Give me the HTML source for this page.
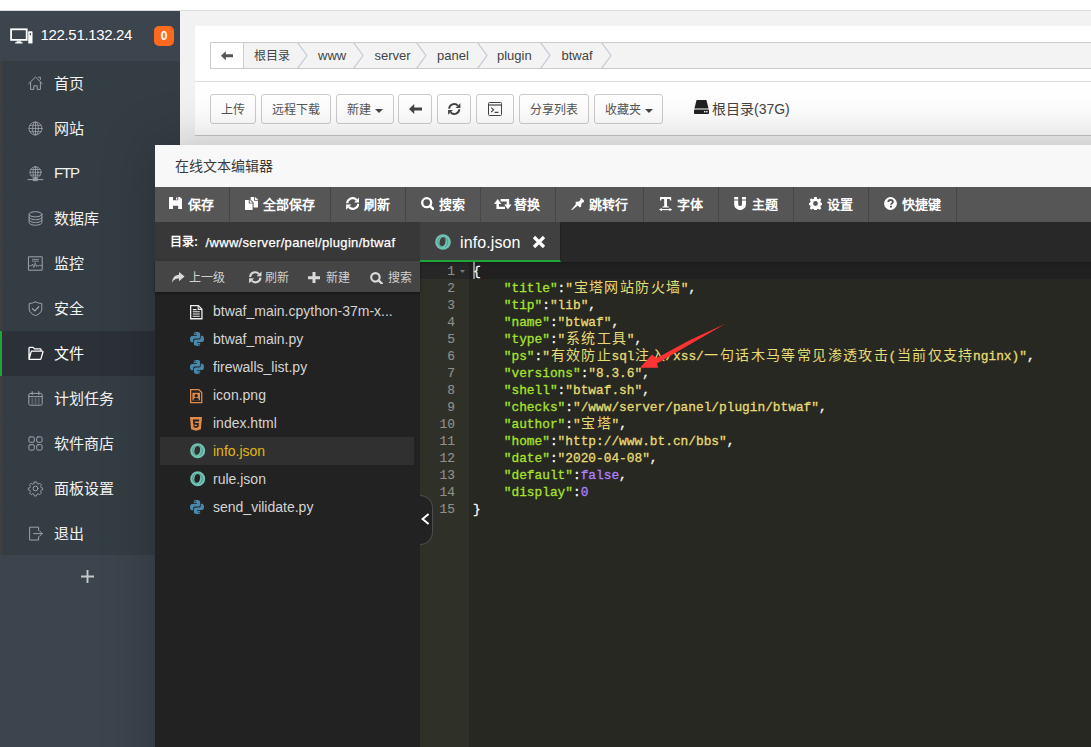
<!DOCTYPE html>
<html lang="zh-CN">
<head>
<meta charset="utf-8">
<title>panel</title>
<style>
*{box-sizing:border-box;margin:0;padding:0}
html,body{width:1091px;height:747px;overflow:hidden;background:#f2f2f2;font-family:"Liberation Sans",sans-serif;}
.abs{position:absolute}
#page{position:relative;width:1091px;height:747px;overflow:hidden;background:#f2f2f2}
/* top strip */
#topstrip{left:0;top:0;width:1091px;height:11px;background:#fff;border-bottom:1px solid #dcdcdc}
/* sidebar */
#side{left:0;top:11px;width:180px;height:736px;background:#3c444d}
#sidehead{left:0;top:0;width:180px;height:50px;background:#3c444d}
#ip{left:40.5px;top:14px;font-size:15px;line-height:20px;color:#fff;white-space:nowrap;letter-spacing:-0.33px}
#badge{left:154px;top:15px;width:20px;height:20px;border-radius:5px;background:#ff6a1f;color:#fff;font-size:12px;font-weight:bold;line-height:20px;text-align:center}
#menu{left:0;top:50px;width:180px;height:494px;background:#353d44}
#menu .edge{left:0;top:0;width:2px;height:494px;background:repeating-linear-gradient(#3f3f3f 0,#3f3f3f 44px,#353d44 44px,#353d44 45px)}
.mi{left:0;width:180px;height:45px;}
.mi .t{position:absolute;left:54px;top:0;line-height:45px;font-size:15px;color:#f2f2f2;white-space:nowrap}
.mi svg{position:absolute;left:28px;top:15px;width:15px;height:15px;overflow:visible}
.mi.cur{background:#2c3138;border-left:2px solid #20a53a}
.mi.cur .t{left:52px;color:#fff}
.mi.cur svg{left:26px}
#plus{left:81px;top:559px;width:13px;height:13px}
/* main */
#card{left:195px;top:26px;width:900px;height:110px;background:#fff;border-bottom:1px solid #c8c8c8}
#crumb{left:15px;top:15.5px;width:890px;height:27.5px;border:1px solid #ccc;background:#f3f3f3}
#crumb .back{left:0;top:0;width:33px;height:25px;background:#fff;border-right:1px solid #ccc}
#crumb .c{top:0;height:25px;line-height:25px;font-size:13px;color:#444;white-space:nowrap}
#crumb svg.chev{position:absolute;top:0;width:11px;height:25px}
#sep1{left:0;top:55px;width:900px;height:1px;background:#ddd}
.btn{top:68px;height:30px;border:1px solid #ccc;border-radius:3px;background:#fff;font-size:12px;line-height:30px;color:#555;text-align:center;white-space:nowrap}
#disk{left:517px;top:73px;font-size:14px;line-height:20px;color:#444;white-space:nowrap}
/* modal */
#modal{left:155px;top:145px;width:1040px;height:720px;background:#222;box-shadow:1px 1px 50px rgba(0,0,0,.25)}
#mtitle{left:0;top:0;width:960px;height:42px;background:#f8f8f8;color:#3a3a3a;font-size:14px;line-height:42px;padding-left:20px}
#tbar{left:0;top:42px;width:960px;height:35px;background:#565656}
.tb{top:0;height:35px;border-right:1px solid #464646;color:#fff;font-size:13px;font-weight:bold;line-height:35px;white-space:nowrap}
.tb .tx{position:absolute;top:0;right:14.2px}
.tb svg{position:absolute;left:14px;top:10px;width:14px;height:14px}
#dirrow{left:0;top:77px;width:265px;height:39px;background:#383838;color:#fff;font-size:12px;line-height:41px;white-space:nowrap}
#tabbar{left:265px;top:77px;width:700px;height:40px;background:#282828}
#tab{left:0;top:0;width:141px;height:40px;background:#404040;border-right:1px solid #222;border-bottom:2px solid #20a53a}
#treebar{left:0;top:116px;width:265px;height:31px;background:#454545;box-shadow:0 1px 3px rgba(0,0,0,.45);z-index:2;color:#d0d0d0;font-size:12px;line-height:35px}
#tree{left:0;top:147px;width:265px;height:480px;background:#222}
.f{left:0;width:265px;height:28px}
.f .n{position:absolute;left:58px;top:0;line-height:28px;font-size:14px;color:#d4d4d4;white-space:nowrap}
.f svg{position:absolute;left:35px;top:8px;width:13px;height:14px;overflow:visible}
#selrow{left:5px;top:145px;width:254px;height:28px;background:#303030}
/* editor */
#ed{left:265px;top:117px;width:700px;height:500px;background:#272822}
#gut{left:0;top:0;width:49px;height:500px;background:#2f3129}
#actg{left:0;top:0;width:49px;height:17px;background:linear-gradient(#1f1f1f,#272727 4px)}
#actl{left:49px;top:0;width:660px;height:17px;background:linear-gradient(#1b1b1b,#202020 4px)}
.ln{right:14px;height:17px;line-height:17px;font-family:"Liberation Mono",monospace;font-size:12.83px;color:#8f908a}
.cl{left:53px;height:17px;line-height:17px;font-family:"Liberation Mono",monospace;font-size:12.83px;color:#f8f8f2;white-space:nowrap}
.cl i{display:inline-block;width:7.7px;font-style:normal;text-align:left}
.cl{-webkit-text-stroke:.3px}.ln{-webkit-text-stroke:.15px}.k{color:#a6e22e}.s{color:#e6db74}.p{color:#ae81ff}
.z{display:inline-block;width:15.4px;text-align:center;font-size:14px;-webkit-text-stroke:0}
#handle{left:265px;top:350px;width:13px;height:50px;background:#222;border:1px solid #4c4c4c;border-left:none;border-radius:0 13px 13px 0}
</style>
</head>
<body>
<div id="page">
<div id="topstrip" class="abs"></div>

<!-- main card -->
<div id="card" class="abs">
  <div id="crumb" class="abs">
    <div class="back abs"><svg class="abs" style="left:10.3px;top:8px;width:12px;height:9.5px" viewBox="0 0 13 10"><path d="M0 5L5.2 0V3.4H13V6.6H5.2V10Z" fill="#555"/></svg></div>
    <div class="c abs" style="left:42.5px;font-size:12px;line-height:27px">根目录</div>
    <div class="c abs" style="left:107px;font-size:13px">www</div>
    <div class="c abs" style="left:163.5px;font-size:13px">server</div>
    <div class="c abs" style="left:226px;font-size:13px">panel</div>
    <div class="c abs" style="left:286px;font-size:13px">plugin</div>
    <div class="c abs" style="left:350.5px;font-size:13px">btwaf</div>
    <svg class="chev" style="left:86px" viewBox="0 0 11 25" fill="none" stroke="#c6c7d6" stroke-width="1.2"><path d="M.5 -.5L10 12.5L.5 25.5"/></svg>
    <svg class="chev" style="left:142px" viewBox="0 0 11 25" fill="none" stroke="#c6c7d6" stroke-width="1.2"><path d="M.5 -.5L10 12.5L.5 25.5"/></svg>
    <svg class="chev" style="left:205px" viewBox="0 0 11 25" fill="none" stroke="#c6c7d6" stroke-width="1.2"><path d="M.5 -.5L10 12.5L.5 25.5"/></svg>
    <svg class="chev" style="left:266px" viewBox="0 0 11 25" fill="none" stroke="#c6c7d6" stroke-width="1.2"><path d="M.5 -.5L10 12.5L.5 25.5"/></svg>
    <svg class="chev" style="left:329px" viewBox="0 0 11 25" fill="none" stroke="#c6c7d6" stroke-width="1.2"><path d="M.5 -.5L10 12.5L.5 25.5"/></svg>
    <svg class="chev" style="left:390px" viewBox="0 0 11 25" fill="none" stroke="#c6c7d6" stroke-width="1.2"><path d="M.5 -.5L10 12.5L.5 25.5"/></svg>
  </div>
  <div id="sep1" class="abs"></div>
  <div class="btn abs" style="left:15px;width:46px">上传</div>
  <div class="btn abs" style="left:66px;width:70px">远程下载</div>
  <div class="btn abs" style="left:141px;width:58px">新建<svg style="display:inline-block;vertical-align:middle;margin-left:4px;width:8px;height:4px" viewBox="0 0 8 4"><path d="M0 0H8L4 4Z" fill="#444"/></svg></div>
  <div class="btn abs" style="left:203px;width:34px"><svg class="abs" style="left:10px;top:9px;width:13px;height:10px" viewBox="0 0 13 10"><path d="M0 5L5.2 0V3.4H13V6.6H5.2V10Z" fill="#444"/></svg></div>
  <div class="btn abs" style="left:242px;width:34px"><svg class="abs" style="left:10px;top:8px;width:12.5px;height:12px" viewBox="0 0 13.5 13"><g fill="none" stroke="#444" stroke-width="2.1"><path d="M1.2 6.2A5.4 5.4 0 0 1 10.6 2.9"/><path d="M12.3 6.8A5.4 5.4 0 0 1 2.9 10.1"/></g><path d="M13.4 .2V5.5H8.1Z M.1 12.8V7.5H5.4Z" fill="#444"/></svg></div>
  <div class="btn abs" style="left:281px;width:38px"><svg class="abs" style="left:11px;top:7px;width:14px;height:14px" viewBox="0 0 14 14" fill="none" stroke="#444" stroke-width="1"><rect x=".5" y=".5" width="13" height="13" rx="1"/><path d="M.5 3H13.5" stroke-width="1.2"/><path d="M3.2 5.6L5.6 7.8L3.2 10M6.6 10.4H10.4" stroke-width="1.1"/></svg></div>
  <div class="btn abs" style="left:324px;width:70px">分享列表</div>
  <div class="btn abs" style="left:399px;width:69px">收藏夹<svg style="display:inline-block;vertical-align:middle;margin-left:4px;width:8px;height:4px" viewBox="0 0 8 4"><path d="M0 0H8L4 4Z" fill="#444"/></svg></div>
  <svg class="abs" style="left:499px;top:74px;width:15px;height:14px" viewBox="0 0 15 14"><path d="M2.6 0H12.4L14.6 8.6H.4Z" fill="#222"/><rect x="0" y="9.4" width="15" height="4.6" rx=".8" fill="#222"/><rect x="10" y="11" width="1.4" height="1.4" fill="#fff"/><rect x="12.2" y="11" width="1.4" height="1.4" fill="#fff"/></svg>
  <div id="disk" class="abs">根目录(37G)</div>
</div>

<!-- sidebar -->
<div id="side" class="abs">
  <div id="sidehead" class="abs">
    <svg class="abs" style="left:9.5px;top:17px;width:23px;height:16px" viewBox="0 0 23 16"><rect x="1.1" y="1.3" width="15.6" height="10.6" fill="none" stroke="#fff" stroke-width="1.8"/><path d="M6.6 13.2H11.2V14.2H12.6V15.6H5.2V14.2H6.6Z" fill="#fff"/><rect x="18.2" y="3.2" width="4.3" height="12.4" rx=".7" fill="#fff"/><rect x="19.8" y="5" width="1.1" height="2.4" fill="#3c444d"/></svg>
    <div id="ip" class="abs">122.51.132.24</div>
    <div id="badge" class="abs">0</div>
  </div>
  <div id="menu" class="abs"><div class="edge abs"></div>
<div class="mi abs" style="top:0px"><svg viewBox="0 0 15 15" fill="none" stroke="#9ea3a7" stroke-width="1" stroke-linejoin="round" stroke-linecap="round"><path d="M0.8 7.6 L7.5 1 L14.2 7.6 M2.6 6.6 V13.4 H5.8 V9.8 H9.2 V13.4 H12.4 V6.6 M10.6 1.2 h1.8 v2.2"/></svg><span class="t">首页</span></div>
<div class="mi abs" style="top:45px"><svg viewBox="0 0 15 15" fill="none" stroke="#9ea3a7" stroke-width="1" stroke-linejoin="round" stroke-linecap="round"><g stroke-width=".8"><circle cx="7.5" cy="7.5" r="6.5"/><ellipse cx="7.5" cy="7.5" rx="2.9" ry="6.5"/><path d="M7.5 1V14M1 7.5H14M1.9 4.3H13.1M1.9 10.7H13.1"/></g></svg><span class="t">网站</span></div>
<div class="mi abs" style="top:90px"><svg viewBox="0 0 15 15" fill="none" stroke="#9ea3a7" stroke-width="1" stroke-linejoin="round" stroke-linecap="round"><g stroke-width=".8"><circle cx="7.5" cy="6.3" r="5.6"/><ellipse cx="7.5" cy="6.3" rx="2.5" ry="5.6"/><path d="M7.5 .7V11.9M1.9 6.3H13.1M2.7 3.5H12.3M2.7 9.1H12.3"/></g><path d="M0 13.6H15M5.6 12.6h3.8v2H5.6z"/></svg><span class="t" style="letter-spacing:-1.2px;top:-1px">FTP</span></div>
<div class="mi abs" style="top:135px"><svg viewBox="0 0 15 15" fill="none" stroke="#9ea3a7" stroke-width="1" stroke-linejoin="round" stroke-linecap="round"><ellipse cx="7.5" cy="3.3" rx="6.4" ry="2.6"/><path d="M1.1 3.3V11.6C1.1 13 4 14.2 7.5 14.2S13.9 13 13.9 11.6V3.3M1.1 6.1C1.1 7.5 4 8.7 7.5 8.7S13.9 7.5 13.9 6.1M1.1 8.9C1.1 10.3 4 11.5 7.5 11.5S13.9 10.3 13.9 8.9"/></svg><span class="t">数据库</span></div>
<div class="mi abs" style="top:180px"><svg viewBox="0 0 15 15" fill="none" stroke="#9ea3a7" stroke-width="1" stroke-linejoin="round" stroke-linecap="round"><rect x=".8" y=".8" width="13.4" height="13.4"/><path d="M4.5 3.4H10.5M4.5 5.2H10.5M.8 9.8H3.6L4.6 8L5.8 11.6L7.2 6.8L8.4 10.6L9.4 9L10.2 10.2L11.2 9.4H14.2" stroke-width=".8"/></svg><span class="t">监控</span></div>
<div class="mi abs" style="top:225px"><svg viewBox="0 0 15 15" fill="none" stroke="#9ea3a7" stroke-width="1" stroke-linejoin="round" stroke-linecap="round"><path d="M7.5 .8C5.6 1.9 3.4 2.4 1.2 2.5V7.8C1.2 11 3.9 13.3 7.5 14.6C11.1 13.3 13.8 11 13.8 7.8V2.5C11.6 2.4 9.4 1.9 7.5 .8Z"/><path d="M4.4 7.6L6.8 9.9L10.8 5.7" stroke-width="1.3"/></svg><span class="t">安全</span></div>
<div class="mi abs cur" style="top:270px"><svg viewBox="0 0 15 15" fill="none" stroke="#fff" stroke-width="1" stroke-linejoin="round" stroke-linecap="round"><path d="M1 13.3V2.2C1 1.7 1.3 1.4 1.8 1.4H5.2L6.6 2.9H12.2C12.7 2.9 13 3.2 13 3.7V5.2M1 13.3L3.1 5.9C3.2 5.5 3.5 5.2 4 5.2H14.3C14.8 5.2 15 5.6 14.9 6L13 12.6C12.9 13 12.6 13.3 12.1 13.3Z" stroke-width="1.3"/></svg><span class="t">文件</span></div>
<div class="mi abs" style="top:315px"><svg viewBox="0 0 15 15" fill="none" stroke="#9ea3a7" stroke-width="1" stroke-linejoin="round" stroke-linecap="round"><rect x=".8" y="2.4" width="13.4" height="11.8" rx="1.6"/><path d="M.8 5.6H14.2M4.2 .6V3.6M10.8 .6V3.6"/><path d="M3.8 8H4.8M7 8H8M10.2 8H11.2M3.8 10H4.8M7 10H8M10.2 10H11.2M3.8 12H4.8M7 12H8M10.2 12H11.2" stroke-width=".9" opacity=".8"/></svg><span class="t">计划任务</span></div>
<div class="mi abs" style="top:360px"><svg viewBox="0 0 15 15" fill="none" stroke="#9ea3a7" stroke-width="1" stroke-linejoin="round" stroke-linecap="round"><rect x=".9" y=".9" width="5.4" height="5.4" rx="1.3"/><rect x="8.7" y=".9" width="5.4" height="5.4" rx="1.3"/><rect x=".9" y="8.7" width="5.4" height="5.4" rx="1.3"/><rect x="8.7" y="8.7" width="5.4" height="5.4" rx="1.3"/></svg><span class="t">软件商店</span></div>
<div class="mi abs" style="top:405px"><svg viewBox="0 0 15 15" fill="none" stroke="#9ea3a7" stroke-width="1" stroke-linejoin="round" stroke-linecap="round"><circle cx="7.5" cy="7.5" r="2.4"/><path d="M6.3 .9H8.7L9.1 2.7L10.3 3.2L11.9 2.2L13.5 3.9L12.5 5.4L13 6.6L14.7 7V8.9L13 9.3L12.4 10.5L13.4 12.1L11.8 13.7L10.2 12.7L9 13.2L8.6 15H6.4L6 13.2L4.8 12.7L3.2 13.7L1.6 12.1L2.6 10.5L2 9.3L.3 8.9V7L2 6.6L2.5 5.4L1.5 3.9L3.1 2.2L4.7 3.2L5.9 2.7Z" stroke-width=".9"/></svg><span class="t">面板设置</span></div>
<div class="mi abs" style="top:450px"><svg viewBox="0 0 15 15" fill="none" stroke="#9ea3a7" stroke-width="1" stroke-linejoin="round" stroke-linecap="round"><path d="M10.6 4.4V1.2H1.6V14H10.6V10.8M5.6 7.6H14.2M11.6 5L14.2 7.6L11.6 10.2"/></svg><span class="t">退出</span></div>
  </div>
  <svg id="plus" class="abs" viewBox="0 0 13 13" fill="none" stroke="#c6c8ca" stroke-width="1.9"><path d="M6.5 0V13M0 6.5H13"/></svg>
</div>

<!-- modal -->
<div id="modal" class="abs">
  <div id="mtitle" class="abs">在线文本编辑器</div>
  <div id="tbar" class="abs">
    <div class="tb abs" style="left:0px;width:74.5px"><svg viewBox="0 0 13.3 12.2" style="left:14px;top:10px;width:13.3px;height:12.2px"><path d="M0 .8C0 .3 .3 0 .8 0H10.9L13.3 2.4V11.4C13.3 11.9 13 12.2 12.5 12.2H.8C.3 12.2 0 11.9 0 11.4Z M4 0V3.3H9.2V0Z M4 8.8V12.2H9.2V8.8Z" fill="#fff" fill-rule="evenodd"/><rect x="7" y=".5" width="1.3" height="2.2" fill="#fff"/></svg><span class="tx" style="width:26px">保存</span></div>
    <div class="tb abs" style="left:74.5px;width:101.0px"><svg viewBox="0 0 13.7 13" style="left:15.2px;top:10px;width:13.7px;height:13px"><path d="M0 3.6C0 3.2 .2 3 .6 3H3.8V6.6H7.6V12.4C7.6 12.8 7.4 13 7 13H.6C.2 13 0 12.8 0 12.4Z" fill="#fff"/><path d="M4.7 2.8L7.7 5.8H4.7Z" fill="#fff"/><path d="M5.6 .6C5.6 .2 5.8 0 6.2 0H9.2V3.8H13.7V10C13.7 10.4 13.5 10.6 13.1 10.6H8.6V5.4L5.6 2.4Z" fill="#fff"/><path d="M10.1 0L13.7 3H10.1Z" fill="#fff"/></svg><span class="tx" style="width:52px">全部保存</span></div>
    <div class="tb abs" style="left:175.5px;width:75.0px"><svg viewBox="0 0 13.5 13" style="left:15.2px;top:10px;width:13.5px;height:13px"><g fill="none" stroke="#fff" stroke-width="2.2"><path d="M1.2 6.2A5.4 5.4 0 0 1 10.6 2.9"/><path d="M12.3 6.8A5.4 5.4 0 0 1 2.9 10.1"/></g><path d="M13.4 .2V5.5H8.1Z M.1 12.8V7.5H5.4Z" fill="#fff"/></svg><span class="tx" style="width:26px">刷新</span></div>
    <div class="tb abs" style="left:250.5px;width:75.0px"><svg viewBox="0 0 13.7 13.4" style="left:15.2px;top:9.6px;width:13.7px;height:13.4px"><circle cx="5.7" cy="5.7" r="4.5" fill="none" stroke="#fff" stroke-width="2.3"/><path d="M9 9L12.6 12.3" stroke="#fff" stroke-width="2.6" stroke-linecap="round"/></svg><span class="tx" style="width:26px">搜索</span></div>
    <div class="tb abs" style="left:325.5px;width:75.0px"><svg viewBox="0 0 17.6 10.4" style="left:13.5px;top:12px;width:17.6px;height:10.4px"><g fill="none" stroke="#fff" stroke-width="2.5"><path d="M3.7 4V9.1H11"/><path d="M13.9 6.4V1.3H6.6"/></g><path d="M0 5L3.7 0L7.4 5Z M10.2 5.4L13.9 10.4L17.6 5.4Z" fill="#fff"/></svg><span class="tx" style="width:26px">替换</span></div>
    <div class="tb abs" style="left:400.5px;width:88.0px"><svg viewBox="0 0 13.8 12.6" style="left:15px;top:10.5px;width:13.8px;height:12.6px"><path d="M5.3 3.7L7.9 3.5L9.7 1.7L9.3 .6L10.4 0L13.8 3.4L13.2 4.5L12.1 4.1L10.3 5.9L10.1 8.5L8.8 9.4L6.9 7.5L.4 12.6L0 12.2L5.1 5.7L4.2 4.8Z" fill="#fff"/></svg><span class="tx" style="width:39px">跳转行</span></div>
    <div class="tb abs" style="left:488.5px;width:75.0px"><svg viewBox="0 0 13.2 14.2" style="left:15.5px;top:10px;width:13.2px;height:14.2px"><path d="M1 0H12.2V3.6H11L10.6 2H8V9.2L9.8 9.6V10.6H3.4V9.6L5.2 9.2V2H2.6L2.2 3.6H1Z" fill="#fff"/><path d="M1.6 12.6H11.6" stroke="#fff" stroke-width="1.1"/><path d="M2.8 11L0 12.6L2.8 14.2Z M10.4 11L13.2 12.6L10.4 14.2Z" fill="#fff"/></svg><span class="tx" style="width:26px">字体</span></div>
    <div class="tb abs" style="left:563.5px;width:75.0px"><svg viewBox="0 0 12.2 13.2" style="left:15px;top:9.8px;width:12.2px;height:13.2px"><path d="M.2 0H4.2V2.4H.2Z M8 0H12V2.4H8Z" fill="#fff"/><path d="M.2 3.4H4.2V7.2A1.9 1.9 0 0 0 8 7.2V3.4H12V7.2A5.9 5.9 0 0 1 .2 7.2Z" fill="#fff"/></svg><span class="tx" style="width:26px">主题</span></div>
    <div class="tb abs" style="left:638.5px;width:75.0px"><svg viewBox="0 0 13 13" style="left:15px;top:9.8px;width:13px;height:13px"><path fill="#fff" fill-rule="evenodd" d="M5.3 0H7.7L8.1 1.8L9.2 2.3L10.8 1.3L12.3 2.8L11.3 4.4L11.8 5.5L13 5.9V8.1L11.8 8.5L11.3 9.6L12.3 11.2L10.8 12.7L9.2 11.7L8.1 12.2L7.7 13H5.3L4.9 12.2L3.8 11.7L2.2 12.7L.7 11.2L1.7 9.6L1.2 8.5L0 8.1V5.9L1.2 5.5L1.7 4.4L.7 2.8L2.2 1.3L3.8 2.3L4.9 1.8Z M6.5 4.1A2.4 2.4 0 1 0 6.5 8.9A2.4 2.4 0 1 0 6.5 4.1Z"/></svg><span class="tx" style="width:26px">设置</span></div>
    <div class="tb abs" style="left:713.5px;width:88.0px"><svg viewBox="0 0 13 13" style="left:15px;top:9.8px;width:13px;height:13px"><circle cx="6.5" cy="6.5" r="6.4" fill="#fff"/><path d="M4.3 5.1C4.3 3.8 5.2 3 6.6 3S8.9 3.8 8.9 4.9C8.9 6.3 7 6.4 7 7.8" fill="none" stroke="#565656" stroke-width="1.8"/><rect x="6" y="8.8" width="1.9" height="1.8" fill="#565656"/></svg><span class="tx" style="width:39px">快捷键</span></div>
  </div>
  <div id="dirrow" class="abs"><span class="abs" style="left:15px;top:0;font-weight:bold">目录:</span><span class="abs" style="left:50.5px;top:0;font-size:13px;letter-spacing:.33px;-webkit-text-stroke:.25px">/www/server/panel/plugin/btwaf</span></div>
  <div id="tabbar" class="abs"><div id="tab" class="abs"><svg class="abs" style="left:14.5px;top:11.7px;width:16px;height:16px" viewBox="0 0 16 16"><circle cx="8.0" cy="8.0" r="7.8" fill="#6fc3b3"/><ellipse cx="7.5" cy="7.8" rx="2.89" ry="4.52" fill="#404040" transform="rotate(12 8.0 8.0)"/><path d="M8.4 2.85C13.62 3.71 14.24 10.34 9.95 13.15" fill="none" stroke="#404040" stroke-width=".6" opacity=".6"/><path d="M6.8 13.15C1.76 11.12 1.76 5.27 5.66 2.85" fill="none" stroke="#404040" stroke-width=".6" opacity=".6"/></svg><span class="abs" style="left:40px;top:0;line-height:42px;font-size:16px;letter-spacing:.1px;color:#fff">info.json</span><svg class="abs" style="left:112px;top:13px;width:14px;height:14px" viewBox="0 0 14 14"><path d="M2 2L12 12M12 2L2 12" stroke="#fff" stroke-width="3.2"/></svg></div></div>
  <div id="treebar" class="abs"><svg class="abs" style="left:17.4px;top:11.0px;width:12.6px;height:11px" viewBox="0 0 12.6 11"><path d="M7 0L12.6 4.6L7 9.2V6.4C3.8 6.4 1.6 7.4 0 11C.2 6 2.8 3 7 2.8Z" fill="#dadada"/></svg><span class="abs" style="left:33.5px;top:0">上一级</span><svg class="abs" style="left:94.4px;top:10.2px;width:12.6px;height:12.6px" viewBox="0 0 13.5 13"><g fill="none" stroke="#dadada" stroke-width="2.2"><path d="M1.2 6.2A5.4 5.4 0 0 1 10.6 2.9"/><path d="M12.3 6.8A5.4 5.4 0 0 1 2.9 10.1"/></g><path d="M13.4 .2V5.5H8.1Z M.1 12.8V7.5H5.4Z" fill="#dadada"/></svg><span class="abs" style="left:109.5px;top:0">刷新</span><svg class="abs" style="left:152.8px;top:11.0px;width:12px;height:11.4px" viewBox="0 0 12 11.4"><path d="M4.5 0H7.5V4.2H12V7.2H7.5V11.4H4.5V7.2H0V4.2H4.5Z" fill="#dadada"/></svg><span class="abs" style="left:171px;top:0">新建</span><svg class="abs" style="left:214.7px;top:10.5px;width:13px;height:12.6px" viewBox="0 0 13.7 13.4"><circle cx="5.7" cy="5.7" r="4.5" fill="none" stroke="#dadada" stroke-width="2.3"/><path d="M9 9L12.6 12.3" stroke="#dadada" stroke-width="2.6" stroke-linecap="round"/></svg><span class="abs" style="left:232.8px;top:0">搜索</span></div>
  <div id="tree" class="abs">
    <div id="selrow" class="abs"></div>
    <div class="f abs" style="top:5px"><svg viewBox="0 0 12.6 14.4" style="left:35px;top:7.7px;width:12.6px;height:14.4px"><path d="M.65 .65H8.4L11.95 4.2V13.75H.65Z" fill="none" stroke="#ededed" stroke-width="1.3"/><path d="M8.2 .8V4.4H11.8" fill="none" stroke="#ededed" stroke-width="1.1"/><path d="M2.8 4.6H6.6M2.8 6.8H9.8M2.8 9H9.8M2.8 11.2H9.8" stroke="#ededed" stroke-width="1.1"/></svg><span class="n">btwaf_main.cpython-37m-x...</span></div>
    <div class="f abs" style="top:33px"><svg viewBox="0 0 14 14" style="left:35px;top:6.8px;width:14px;height:14px"><path d="M6.9 0C3.6 0 3.8 1.4 3.8 1.4V3.3H7V3.9H2.2C2.2 3.9 0 3.7 0 7S1.9 10.2 1.9 10.2H3.2V8.4C3.2 8.4 3.1 6.6 5 6.6H8.3C8.3 6.6 10.1 6.6 10.1 4.9V1.9C10.1 1.9 10.4 0 6.9 0Z" fill="#4788ab"/><circle cx="5.1" cy="1.7" r=".65" fill="#222"/><path d="M7.1 14C10.4 14 10.2 12.6 10.2 12.6V10.7H7V10.1H11.8C11.8 10.1 14 10.3 14 7S12.1 3.8 12.1 3.8H10.8V5.6C10.8 5.6 10.9 7.4 9 7.4H5.7C5.7 7.4 3.9 7.4 3.9 9.1V12.1C3.9 12.1 3.6 14 7.1 14Z" fill="#4788ab"/><circle cx="8.9" cy="12.3" r=".65" fill="#222"/></svg><span class="n">btwaf_main.py</span></div>
    <div class="f abs" style="top:61px"><svg viewBox="0 0 14 14" style="left:35px;top:6.8px;width:14px;height:14px"><path d="M6.9 0C3.6 0 3.8 1.4 3.8 1.4V3.3H7V3.9H2.2C2.2 3.9 0 3.7 0 7S1.9 10.2 1.9 10.2H3.2V8.4C3.2 8.4 3.1 6.6 5 6.6H8.3C8.3 6.6 10.1 6.6 10.1 4.9V1.9C10.1 1.9 10.4 0 6.9 0Z" fill="#4788ab"/><circle cx="5.1" cy="1.7" r=".65" fill="#222"/><path d="M7.1 14C10.4 14 10.2 12.6 10.2 12.6V10.7H7V10.1H11.8C11.8 10.1 14 10.3 14 7S12.1 3.8 12.1 3.8H10.8V5.6C10.8 5.6 10.9 7.4 9 7.4H5.7C5.7 7.4 3.9 7.4 3.9 9.1V12.1C3.9 12.1 3.6 14 7.1 14Z" fill="#4788ab"/><circle cx="8.9" cy="12.3" r=".65" fill="#222"/></svg><span class="n">firewalls_list.py</span></div>
    <div class="f abs" style="top:89px"><svg viewBox="0 0 12.4 14.2" style="left:35px;top:8px;width:12.4px;height:14.2px"><path d="M.65 .65H8.8L11.75 3.6V13.55H.65Z" fill="none" stroke="#e28b48" stroke-width="1.3"/><rect x="2.4" y="3.8" width="7.6" height="7.6" fill="#e28b48"/><circle cx="6.2" cy="6.8" r="1.7" fill="#222"/><path d="M3.4 11.4C3.4 9.4 4.6 8.7 6.2 8.7S9 9.4 9 11.4Z" fill="#222"/></svg><span class="n">icon.png</span></div>
    <div class="f abs" style="top:117px"><svg viewBox="0 0 12 13.8" style="left:35.2px;top:7.8px;width:12px;height:13.8px"><path d="M0 0H12L10.9 12.2L6 13.8L1.1 12.2Z" fill="#e28b48"/><path d="M2.9 2.6H9.2L9 4.4H4.7L4.9 6H8.9L8.5 10.1L6 10.9L3.5 10.1L3.35 8.4H5L5.05 9L6 9.3L6.95 9L7.1 7.7H3.3Z" fill="#222"/></svg><span class="n">index.html</span></div>
    <div class="f abs" style="top:145px"><svg viewBox="0 0 15.4 15.4" style="left:35px;top:6px;width:15.4px;height:15.4px"><circle cx="7.7" cy="7.7" r="7.5" fill="#6fc3b3"/><ellipse cx="7.2" cy="7.5" rx="2.77" ry="4.35" fill="#303030" transform="rotate(12 7.7 7.7)"/><path d="M8.1 2.75C13.10 3.58 13.70 9.95 9.57 12.65" fill="none" stroke="#303030" stroke-width=".6" opacity=".6"/><path d="M6.5 12.65C1.70 10.70 1.70 5.08 5.45 2.75" fill="none" stroke="#303030" stroke-width=".6" opacity=".6"/></svg><span class="n" style="color:#e2b714">info.json</span></div>
    <div class="f abs" style="top:173px"><svg viewBox="0 0 15.4 15.4" style="left:35px;top:6px;width:15.4px;height:15.4px"><circle cx="7.7" cy="7.7" r="7.5" fill="#6fc3b3"/><ellipse cx="7.2" cy="7.5" rx="2.77" ry="4.35" fill="#222" transform="rotate(12 7.7 7.7)"/><path d="M8.1 2.75C13.10 3.58 13.70 9.95 9.57 12.65" fill="none" stroke="#222" stroke-width=".6" opacity=".6"/><path d="M6.5 12.65C1.70 10.70 1.70 5.08 5.45 2.75" fill="none" stroke="#222" stroke-width=".6" opacity=".6"/></svg><span class="n">rule.json</span></div>
    <div class="f abs" style="top:201px"><svg viewBox="0 0 14 14" style="left:35px;top:6.8px;width:14px;height:14px"><path d="M6.9 0C3.6 0 3.8 1.4 3.8 1.4V3.3H7V3.9H2.2C2.2 3.9 0 3.7 0 7S1.9 10.2 1.9 10.2H3.2V8.4C3.2 8.4 3.1 6.6 5 6.6H8.3C8.3 6.6 10.1 6.6 10.1 4.9V1.9C10.1 1.9 10.4 0 6.9 0Z" fill="#4788ab"/><circle cx="5.1" cy="1.7" r=".65" fill="#222"/><path d="M7.1 14C10.4 14 10.2 12.6 10.2 12.6V10.7H7V10.1H11.8C11.8 10.1 14 10.3 14 7S12.1 3.8 12.1 3.8H10.8V5.6C10.8 5.6 10.9 7.4 9 7.4H5.7C5.7 7.4 3.9 7.4 3.9 9.1V12.1C3.9 12.1 3.6 14 7.1 14Z" fill="#4788ab"/><circle cx="8.9" cy="12.3" r=".65" fill="#222"/></svg><span class="n">send_vilidate.py</span></div>
  </div>
  <div id="ed" class="abs">
    <div id="gut" class="abs"><div id="actg" class="abs"></div><div class="ln abs" style="top:1px">1</div><div class="ln abs" style="top:18px">2</div><div class="ln abs" style="top:35px">3</div><div class="ln abs" style="top:52px">4</div><div class="ln abs" style="top:69px">5</div><div class="ln abs" style="top:86px">6</div><div class="ln abs" style="top:103px">7</div><div class="ln abs" style="top:120px">8</div><div class="ln abs" style="top:137px">9</div><div class="ln abs" style="top:154px">10</div><div class="ln abs" style="top:171px">11</div><div class="ln abs" style="top:188px">12</div><div class="ln abs" style="top:205px">13</div><div class="ln abs" style="top:222px">14</div><div class="ln abs" style="top:239px">15</div><svg class="abs" style="left:40px;top:8px;width:5px;height:3px" viewBox="0 0 5 3"><path d="M0 0H5L2.5 3Z" fill="#7a7b75"/></svg></div>
    <div id="actl" class="abs"></div><div class="abs" style="left:53px;top:0;width:1.5px;height:17px;background:#8a8a86"></div>
    <div class="cl abs" style="top:1px"><i>{</i></div>
    <div class="cl abs" style="top:18px"><span class="k" style="margin-left:30.8px"><i>&quot;</i><i>t</i><i>i</i><i>t</i><i>l</i><i>e</i><i>&quot;</i></span><i>:</i><span class="s"><i>&quot;</i><span class="z">宝</span><span class="z">塔</span><span class="z">网</span><span class="z">站</span><span class="z">防</span><span class="z">火</span><span class="z">墙</span><i>&quot;</i></span><i>,</i></div>
    <div class="cl abs" style="top:35px"><span class="k" style="margin-left:30.8px"><i>&quot;</i><i>t</i><i>i</i><i>p</i><i>&quot;</i></span><i>:</i><span class="s"><i>&quot;</i><i>l</i><i>i</i><i>b</i><i>&quot;</i></span><i>,</i></div>
    <div class="cl abs" style="top:52px"><span class="k" style="margin-left:30.8px"><i>&quot;</i><i>n</i><i>a</i><i>m</i><i>e</i><i>&quot;</i></span><i>:</i><span class="s"><i>&quot;</i><i>b</i><i>t</i><i>w</i><i>a</i><i>f</i><i>&quot;</i></span><i>,</i></div>
    <div class="cl abs" style="top:69px"><span class="k" style="margin-left:30.8px"><i>&quot;</i><i>t</i><i>y</i><i>p</i><i>e</i><i>&quot;</i></span><i>:</i><span class="s"><i>&quot;</i><span class="z">系</span><span class="z">统</span><span class="z">工</span><span class="z">具</span><i>&quot;</i></span><i>,</i></div>
    <div class="cl abs" style="top:86px"><span class="k" style="margin-left:30.8px"><i>&quot;</i><i>p</i><i>s</i><i>&quot;</i></span><i>:</i><span class="s"><i>&quot;</i><span class="z">有</span><span class="z">效</span><span class="z">防</span><span class="z">止</span><i>s</i><i>q</i><i>l</i><span class="z">注</span><span class="z">入</span><i>/</i><i>x</i><i>s</i><i>s</i><i>/</i><span class="z">一</span><span class="z">句</span><span class="z">话</span><span class="z">木</span><span class="z">马</span><span class="z">等</span><span class="z">常</span><span class="z">见</span><span class="z">渗</span><span class="z">透</span><span class="z">攻</span><span class="z">击</span><i>(</i><span class="z">当</span><span class="z">前</span><span class="z">仅</span><span class="z">支</span><span class="z">持</span><i>n</i><i>g</i><i>i</i><i>n</i><i>x</i><i>)</i><i>&quot;</i></span><i>,</i></div>
    <div class="cl abs" style="top:103px"><span class="k" style="margin-left:30.8px"><i>&quot;</i><i>v</i><i>e</i><i>r</i><i>s</i><i>i</i><i>o</i><i>n</i><i>s</i><i>&quot;</i></span><i>:</i><span class="s"><i>&quot;</i><i>8</i><i>.</i><i>3</i><i>.</i><i>6</i><i>&quot;</i></span><i>,</i></div>
    <div class="cl abs" style="top:120px"><span class="k" style="margin-left:30.8px"><i>&quot;</i><i>s</i><i>h</i><i>e</i><i>l</i><i>l</i><i>&quot;</i></span><i>:</i><span class="s"><i>&quot;</i><i>b</i><i>t</i><i>w</i><i>a</i><i>f</i><i>.</i><i>s</i><i>h</i><i>&quot;</i></span><i>,</i></div>
    <div class="cl abs" style="top:137px"><span class="k" style="margin-left:30.8px"><i>&quot;</i><i>c</i><i>h</i><i>e</i><i>c</i><i>k</i><i>s</i><i>&quot;</i></span><i>:</i><span class="s"><i>&quot;</i><i>/</i><i>w</i><i>w</i><i>w</i><i>/</i><i>s</i><i>e</i><i>r</i><i>v</i><i>e</i><i>r</i><i>/</i><i>p</i><i>a</i><i>n</i><i>e</i><i>l</i><i>/</i><i>p</i><i>l</i><i>u</i><i>g</i><i>i</i><i>n</i><i>/</i><i>b</i><i>t</i><i>w</i><i>a</i><i>f</i><i>&quot;</i></span><i>,</i></div>
    <div class="cl abs" style="top:154px"><span class="k" style="margin-left:30.8px"><i>&quot;</i><i>a</i><i>u</i><i>t</i><i>h</i><i>o</i><i>r</i><i>&quot;</i></span><i>:</i><span class="s"><i>&quot;</i><span class="z">宝</span><span class="z">塔</span><i>&quot;</i></span><i>,</i></div>
    <div class="cl abs" style="top:171px"><span class="k" style="margin-left:30.8px"><i>&quot;</i><i>h</i><i>o</i><i>m</i><i>e</i><i>&quot;</i></span><i>:</i><span class="s"><i>&quot;</i><i>h</i><i>t</i><i>t</i><i>p</i><i>:</i><i>/</i><i>/</i><i>w</i><i>w</i><i>w</i><i>.</i><i>b</i><i>t</i><i>.</i><i>c</i><i>n</i><i>/</i><i>b</i><i>b</i><i>s</i><i>&quot;</i></span><i>,</i></div>
    <div class="cl abs" style="top:188px"><span class="k" style="margin-left:30.8px"><i>&quot;</i><i>d</i><i>a</i><i>t</i><i>e</i><i>&quot;</i></span><i>:</i><span class="s"><i>&quot;</i><i>2</i><i>0</i><i>2</i><i>0</i><i>-</i><i>0</i><i>4</i><i>-</i><i>0</i><i>8</i><i>&quot;</i></span><i>,</i></div>
    <div class="cl abs" style="top:205px"><span class="k" style="margin-left:30.8px"><i>&quot;</i><i>d</i><i>e</i><i>f</i><i>a</i><i>u</i><i>l</i><i>t</i><i>&quot;</i></span><i>:</i><span class="p"><i>f</i><i>a</i><i>l</i><i>s</i><i>e</i></span><i>,</i></div>
    <div class="cl abs" style="top:222px"><span class="k" style="margin-left:30.8px"><i>&quot;</i><i>d</i><i>i</i><i>s</i><i>p</i><i>l</i><i>a</i><i>y</i><i>&quot;</i></span><i>:</i><span class="p"><i>0</i></span></div>
    <div class="cl abs" style="top:239px"><i>}</i></div>
  </div>
  <div id="handle" class="abs"><svg class="abs" style="left:.5px;top:17px;width:9px;height:12px" viewBox="0 0 9 12" fill="none" stroke="#fff" stroke-width="2"><path d="M7.6 1L1.6 6L7.6 11"/></svg></div>
</div>
<svg class="abs" style="left:0;top:0;width:1091px;height:747px;pointer-events:none" viewBox="0 0 1091 747"><path d="M725.5 323.8L690 340L656.3 358.2L652 354.4L640 367.7L658.2 367.7L657 363.6Z" fill="#fb3333"/></svg>
</div>
</body>
</html>
